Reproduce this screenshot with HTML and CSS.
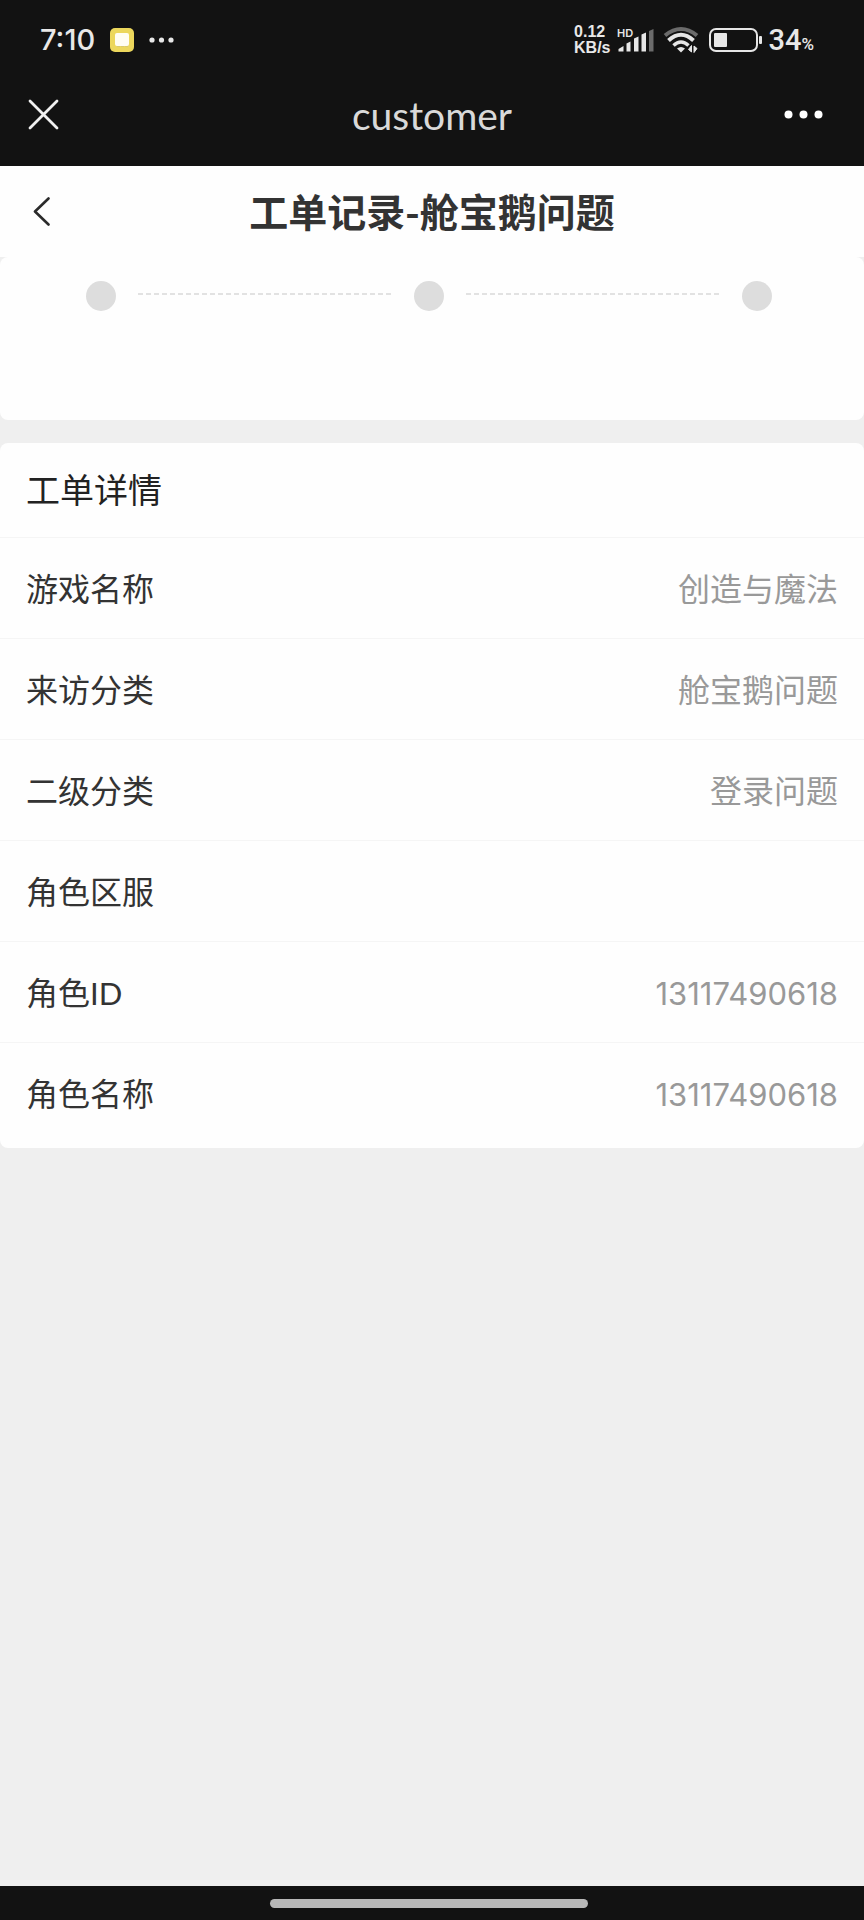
FILE: index.html
```html
<!DOCTYPE html>
<html lang="zh-CN">
<head>
<meta charset="utf-8">
<meta name="viewport" content="width=device-width, initial-scale=1">
<title>工单记录-舱宝鹅问题</title>
<link rel="stylesheet" href="styles.css">
</head>
<body>
<div class="status-bar">
  <div class="status-left">
    <time class="clock">7:10</time>
    <svg class="app-badge" width="24" height="24" viewBox="0 0 24 24" aria-hidden="true">
      <rect width="24" height="24" rx="5" fill="#ecd75c"/>
      <rect x="5" y="5" width="14" height="13" rx="2" fill="#fffdf2"/>
      <path d="M7 18.500H18" stroke="#d8c96e" stroke-width="1" stroke-dasharray="3 1"/>
    </svg>
    <svg width="25" height="6" viewBox="0 0 25 6" fill="#e8e8e8" aria-hidden="true">
      <circle cx="3" cy="3" r="2.600"/><circle cx="12.500" cy="3" r="2.600"/><circle cx="22" cy="3" r="2.600"/>
    </svg>
  </div>
  <div class="status-right">
    <div class="net-speed"><span>0.12</span><span>KB/s</span></div>
    <svg class="signal" width="38" height="26" viewBox="0 0 38 26" fill="#e6e6e6" aria-hidden="true">
      <text class="hd" x="0" y="10">HD</text>
      <path d="M1.500 24.500V22L6.500 19V24.500ZM9.500 24.500V16.500L13.500 14.500V24.500ZM17 24.500V11.500L21.500 9.500V24.500ZM24.500 24.500V7.500L29 5.500V24.500Z"/>
      <path fill="#6b6b6b" d="M32 24.500V4L36.500 2V24.500Z"/>
    </svg>
    <svg class="wifi" width="36" height="28" viewBox="0 0 36 28" fill="none" aria-hidden="true">
      <path d="M2 9.500Q18 -3.500 34 9.500" stroke="#6b6b6b" stroke-width="4"/>
      <path d="M5.500 14.500Q18 3 30.500 14.500" stroke="#e6e6e6" stroke-width="4"/>
      <path d="M10.500 19.500Q18 12.500 25.500 19.500" stroke="#e6e6e6" stroke-width="3.500"/>
      <path d="M14 22.500Q18 19.500 22 22.500L18 26.500Z" fill="#e6e6e6"/>
      <path d="M28.500 19.500V26L25.500 23.500ZM31 26.500V20L34 22.500Z" fill="#e6e6e6" stroke="#e6e6e6"/>
    </svg>
    <svg class="battery" width="54" height="24" viewBox="0 0 54 24" aria-hidden="true">
      <rect x="1" y="1" width="47" height="22" rx="6" fill="none" stroke="#e6e6e6" stroke-width="2"/>
      <rect x="5" y="5" width="13" height="14" rx="1" fill="#e6e6e6"/>
      <rect x="50" y="8" width="3" height="8" rx="1" fill="#e6e6e6"/>
    </svg>
    <div class="charge"><span>34</span><small>%</small></div>
  </div>
</div>

<header class="app-bar">
  <button class="icon-button" type="button" aria-label="关闭">
    <svg width="31" height="31" viewBox="0 0 31 31" fill="none" stroke="#f0f0f0" stroke-width="2.800" stroke-linecap="round"><path d="M2 2 29 29M29 2 2 29"/></svg>
  </button>
  <div class="app-name">customer</div>
  <button class="icon-button" type="button" aria-label="更多">
    <svg width="39" height="9" viewBox="0 0 39 9" fill="#fff"><circle cx="4.500" cy="4.500" r="4"/><circle cx="19.500" cy="4.500" r="4"/><circle cx="34.500" cy="4.500" r="4"/></svg>
  </button>
</header>

<main class="page">
  <div class="page-header">
    <button class="back" type="button" aria-label="返回">
      <svg width="17" height="29" viewBox="0 0 17 29" fill="none" stroke="#2b2b2b" stroke-width="2.600" stroke-linecap="round" stroke-linejoin="round"><path d="M15.500 1.500 2 14.500 15.500 27.500"/></svg>
    </button>
    <h1 class="page-title">工单记录-舱宝鹅问题</h1>
  </div>

  <div class="steps">
    <span class="dot"></span><span class="line"></span><span class="dot"></span><span class="line"></span><span class="dot"></span>
  </div>

  <section class="details">
    <h2 class="details-title">工单详情</h2>
    <dl class="fields">
      <div class="field"><dt>游戏名称</dt><dd>创造与魔法</dd></div>
      <div class="field"><dt>来访分类</dt><dd>舱宝鹅问题</dd></div>
      <div class="field"><dt>二级分类</dt><dd>登录问题</dd></div>
      <div class="field"><dt>角色区服</dt><dd></dd></div>
      <div class="field"><dt>角色<span class="latin">ID</span></dt><dd class="number">13117490618</dd></div>
      <div class="field"><dt>角色名称</dt><dd class="number">13117490618</dd></div>
    </dl>
  </section>
</main>

<footer class="nav-bar"><span class="home-pill"></span></footer>
</body>
</html>
```
FILE: styles.css
```css
* { box-sizing: border-box; }

body {
  margin: 0;
  min-height: 100vh;
  display: flex;
  flex-direction: column;
  background: #efefef;
  color: #333;
  font-family: "Noto Sans", "Noto Sans CJK SC", sans-serif;
}

h1, h2, dl, dd { margin: 0; }
svg { display: block; flex: none; }

button {
  padding: 0;
  border: 0;
  background: none;
}

.status-bar {
  display: flex;
  justify-content: space-between;
  align-items: center;
  height: 79px;
  padding: 0 50px 0 40px;
  background: #121212;
  color: #e8e8e8;
  font-family: Inter, sans-serif;
}

.status-left, .status-right { display: flex; align-items: center; }

.clock {
  font-size: 29px;
  font-weight: 500;
  line-height: 36px;
}

.app-badge { margin: 0 15px; }

.net-speed {
  display: flex;
  flex-direction: column;
  font-family: "Liberation Sans", sans-serif;
  font-size: 16px;
  font-weight: 700;
  line-height: 16px;
}

.signal { margin-left: 6px; }
.wifi { margin-left: 8px; }
.battery { margin-left: 10px; }

.hd {
  font-size: 11px;
  font-weight: 600;
}

.charge {
  display: flex;
  align-items: baseline;
  margin-left: 6px;
  font-family: Roboto, sans-serif;
  font-size: 29px;
  font-weight: 500;
  line-height: 36px;
}

.charge small {
  font-size: 17px;
  font-weight: 500;
  line-height: 1;
}

.app-bar {
  display: grid;
  grid-template-columns: 52px 1fr 40px;
  align-items: center;
  height: 87px;
  padding: 0 40px 16px 28px;
  background: #121212;
}

.icon-button {
  display: flex;
  justify-content: flex-start;
}

.app-name {
  color: #d9d9d9;
  font-family: Lato, sans-serif;
  font-size: 39px;
  line-height: 48px;
  text-align: center;
}

.page { flex: 1; }

.page-header {
  display: grid;
  grid-template-columns: 48px 1fr 48px;
  align-items: center;
  height: 91px;
  padding: 0 33px;
  background: #fefefe;
}

.back {
  display: flex;
  justify-content: flex-start;
}

.page-title {
  padding-bottom: 4px;
  font-family: "Noto Sans CJK SC", sans-serif;
  font-size: 39px;
  font-weight: 700;
  line-height: 56px;
  text-align: center;
}

.steps {
  display: flex;
  align-items: flex-start;
  gap: 22px;
  height: 163px;
  padding: 24px 92px 0 86px;
  border-radius: 8px;
  background: #fefefe;
}

.dot {
  flex: none;
  width: 30px;
  height: 30px;
  border-radius: 50%;
  background: #ddd;
}

.line {
  flex: 1;
  height: 2px;
  margin-top: 12px;
  background: repeating-linear-gradient(90deg, #e2e2e2 0 5px, transparent 5px 8px);
}

.details {
  margin-top: 23px;
  padding-bottom: 5px;
  border-radius: 8px;
  background: #fefefe;
  font-family: "Noto Sans CJK SC", sans-serif;
}

.details-title {
  padding: 0 26px 2px;
  color: #222;
  font-size: 34px;
  font-weight: 400;
  line-height: 92px;
}

.field {
  display: flex;
  justify-content: space-between;
  align-items: center;
  padding: 0 26px 2px;
  border-top: 1px solid #f5f5f5;
  font-size: 32px;
  line-height: 98px;
}

.field dd { color: #999; }

.field .number {
  padding-top: 6px;
  font-family: Inter, sans-serif;
  font-size: 31px;
  line-height: 40px;
}

.latin {
  font-family: Lato, sans-serif;
  font-size: 31px;
  line-height: 1;
}

.nav-bar {
  display: flex;
  justify-content: center;
  align-items: center;
  height: 34px;
  padding-right: 6px;
  background: #121212;
}

.home-pill {
  width: 37%;
  height: 9px;
  border-radius: 5px;
  background: #b8b8b8;
}
```
